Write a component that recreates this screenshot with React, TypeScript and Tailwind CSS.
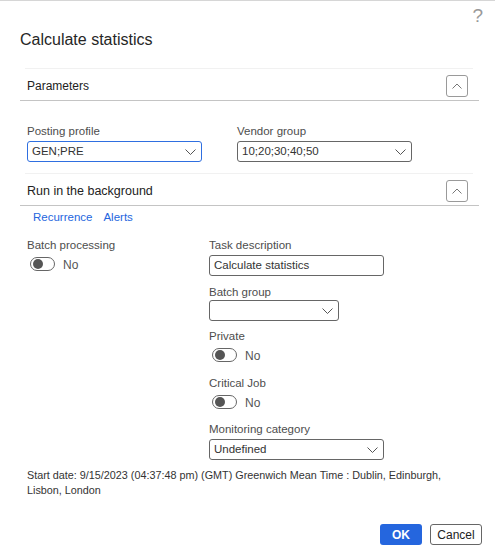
const ChevronDown = () => (
  <svg width="11" height="6" viewBox="0 0 11 6" fill="none">
    <path d="M0.5 0.5 L5.5 5.5 L10.5 0.5" stroke="#555" strokeWidth="1" />
  </svg>
);

const ChevronUp = () => (
  <svg width="10" height="6" viewBox="0 0 10 6" fill="none">
    <path d="M0.5 5.5 L5 1 L9.5 5.5" stroke="#777" strokeWidth="1" />
  </svg>
);

const Label = ({ children }: { children: React.ReactNode }) => (
  <div className="h-[14px] text-[11.5px] leading-[14px] text-[#4d4d4d]">{children}</div>
);

const Select = ({ value, width, focus }: { value?: string; width: string; focus?: boolean }) => (
  <div
    className={`${width} h-[21px] mt-[3px] flex items-center justify-between pl-[4px] pr-[5px] rounded-[3px] border text-[11.5px] font-normal text-[#333] ${
      focus ? 'border-[#2f6fe0]' : 'border-[#666]'
    }`}
  >
    <span>{value}</span>
    <ChevronDown />
  </div>
);

const Toggle = () => (
  <div className="flex items-center h-[14px] pl-[3px]">
    <span className="w-[25px] h-[14px] rounded-full border border-[#666] flex items-center pl-[2px]">
      <span className="w-[10px] h-[10px] rounded-full bg-[#555]" />
    </span>
    <span className="ml-[8px] mt-[2px] text-[12px] text-[#555]">No</span>
  </div>
);

const SectionHeader = ({ title, size }: { title: string; size: string }) => (
  <div className="ml-[20px] mr-[16px]">
    <div className="ml-[5px] mr-[6px] border-t border-[#f1f1f1]" />
    <div className="h-[32px] flex items-start pt-[6px] justify-between pl-[7px] pr-[11px] border-b border-[#c4c4c4]">
      <span className={`${size} leading-[22px] text-[#222]`}>{title}</span>
      <button className="w-[22px] h-[22px] rounded-[3px] border border-[#9a9a9a] flex items-center justify-center">
        <ChevronUp />
      </button>
    </div>
  </div>
);

export default function App() {
  return (
    <div
      className="w-[495px] h-[560px] bg-white border-t border-[#d6d6d6] overflow-hidden"
      style={{ fontFamily: '"Liberation Sans", Arial, sans-serif' }}
    >
      <div className="h-[29px] flex justify-end pr-[12px] pt-[5px]">
        <span className="text-[19px] leading-[19px] text-[#999] font-light">?</span>
      </div>

      <div className="h-[20px] pl-[20px] text-[16px] leading-[20px] text-[#262626]">Calculate statistics</div>

      <div className="mt-[18px]">
        <SectionHeader title="Parameters" size="text-[12px]" />
      </div>

      <div className="flex pl-[27px] pt-[23px]">
        <div className="w-[210px]">
          <Label>Posting profile</Label>
          <Select value="GEN;PRE" width="w-[175px]" focus />
        </div>
        <div>
          <Label>Vendor group</Label>
          <Select value="10;20;30;40;50" width="w-[175px]" />
        </div>
      </div>

      <div className="mt-[11px]">
        <SectionHeader title="Run in the background" size="text-[12.5px]" />
      </div>

      <div className="flex gap-[11px] pl-[33px] pt-[4px] text-[11.5px] leading-[14px] text-[#2566de]">
        <span>Recurrence</span>
        <span>Alerts</span>
      </div>

      <div className="flex pl-[27px] pt-[14px]">
        <div className="w-[182px]">
          <Label>Batch processing</Label>
          <div className="mt-[5px]">
            <Toggle />
          </div>
        </div>

        <div className="flex flex-col">
          <Label>Task description</Label>
          <div className="w-[175px] h-[21px] mt-[3px] flex items-center pl-[4px] rounded-[3px] border border-[#666] text-[11.5px] text-[#333]">
            Calculate statistics
          </div>

          <div className="mt-[9px]">
            <Label>Batch group</Label>
          </div>
          <div className="-mt-[2px]">
            <Select width="w-[130px]" />
          </div>

          <div className="mt-[8px]">
            <Label>Private</Label>
          </div>
          <div className="mt-[5px]">
            <Toggle />
          </div>

          <div className="mt-[14px]">
            <Label>Critical Job</Label>
          </div>
          <div className="mt-[5px]">
            <Toggle />
          </div>

          <div className="mt-[13px]">
            <Label>Monitoring category</Label>
          </div>
          <Select value="Undefined" width="w-[175px]" />
        </div>
      </div>

      <p className="pl-[27px] pr-[20px] mt-[8px] text-[10.8px] leading-[15px] text-[#333]">
        Start date: 9/15/2023 (04:37:48 pm) (GMT) Greenwich Mean Time : Dublin, Edinburgh, Lisbon, London
      </p>

      <div className="flex justify-end gap-[8px] pr-[13px] mt-[26px]">
        <button className="w-[42px] h-[21px] rounded-[3px] bg-[#2566de] text-white text-[12px] font-bold">OK</button>
        <button className="w-[52px] h-[21px] rounded-[3px] border border-[#666] bg-white text-[#222] text-[12px]">
          Cancel
        </button>
      </div>
    </div>
  );
}
